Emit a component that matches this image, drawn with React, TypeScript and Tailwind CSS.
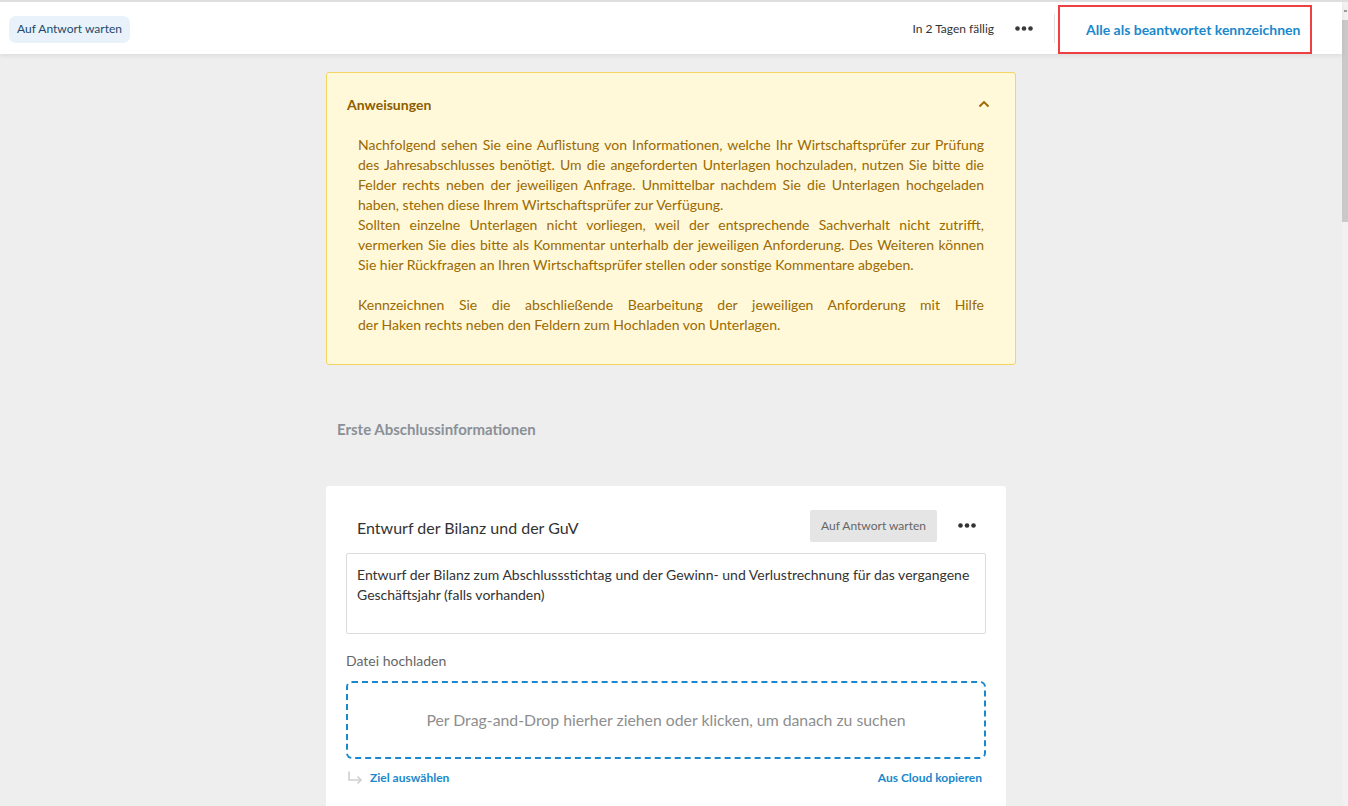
import React from "react";

const Dots = ({ color = "#333" }: { color?: string }) => (
  <svg width="18" height="5" viewBox="0 0 18 5" fill={color}>
    <circle cx="2.5" cy="2.5" r="2.3" />
    <circle cx="9" cy="2.5" r="2.3" />
    <circle cx="15.5" cy="2.5" r="2.3" />
  </svg>
);

const J = ({ children }: { children: React.ReactNode }) => (
  <div className="text-justify [text-align-last:justify]">{children}</div>
);
const L = ({ children }: { children: React.ReactNode }) => <div className="text-left">{children}</div>;

export default function App() {
  return (
    <div
      className="h-[806px] w-[1348px] overflow-hidden flex flex-col border-t-2 border-[#dedede] bg-[#eeeeee]"
      style={{ fontFamily: "Lato, 'Open Sans', 'Liberation Sans', sans-serif" }}
    >
      <div className="flex flex-1 min-h-0">
        <div className="flex-1 flex flex-col min-w-0">
          {/* Header */}
          <header className="h-[52px] bg-white flex items-center pl-[9px] pr-[30px] shadow-[0_2px_4px_rgba(0,0,0,0.07)] relative z-10">
            <div className="h-[27px] mt-[2px] px-[8px] rounded-[7px] bg-[#e9f2fa] text-[12px] text-[#1d4a6c] flex items-center">
              Auf Antwort warten
            </div>
            <div className="flex-1" />
            <span className="text-[12px] text-[#333] mt-[1px]">In 2 Tagen fällig</span>
            <div className="ml-[21px] flex items-center mt-[1px]">
              <Dots color="#3a3a3a" />
            </div>
            <div className="ml-[21px] w-px h-[29px] bg-[#e2e2e2]" />
            <div className="ml-[3px] self-end h-[49px] w-[254px] border-2 border-[#ee3f43] flex items-center pl-[26px] text-[14px] font-bold text-[#1a88cc] whitespace-nowrap">
              Alle als beantwortet kennzeichnen
            </div>
          </header>

          {/* Content */}
          <main className="flex-1 min-h-0 overflow-hidden">
            <div className="w-[690px] mx-auto pt-[18px]">
              {/* Instructions */}
              <section className="bg-[#fff8d9] border border-[#f6d461] rounded-[3px] pt-[21px] pb-[29px]">
                <div className="flex items-center justify-between pl-[20px] pr-[25px] h-[20px]">
                  <span className="text-[14px] font-bold text-[#8d5d00]">Anweisungen</span>
                  <svg width="12" height="8" viewBox="0 0 12 8" fill="none">
                    <polyline points="1.5,6.5 6,2 10.5,6.5" stroke="#9a6600" strokeWidth="1.8" />
                  </svg>
                </div>
                <div className="mt-[21px] px-[31px] text-[14px] leading-[20px] text-[#9c6a00]">
                  <J>Nachfolgend sehen Sie eine Auflistung von Informationen, welche Ihr Wirtschaftsprüfer zur Prüfung</J>
                  <J>des Jahresabschlusses benötigt. Um die angeforderten Unterlagen hochzuladen, nutzen Sie bitte die</J>
                  <J>Felder rechts neben der jeweiligen Anfrage. Unmittelbar nachdem Sie die Unterlagen hochgeladen</J>
                  <L>haben, stehen diese Ihrem Wirtschaftsprüfer zur Verfügung.</L>
                  <J>Sollten einzelne Unterlagen nicht vorliegen, weil der entsprechende Sachverhalt nicht zutrifft,</J>
                  <J>vermerken Sie dies bitte als Kommentar unterhalb der jeweiligen Anforderung. Des Weiteren können</J>
                  <L>Sie hier Rückfragen an Ihren Wirtschaftsprüfer stellen oder sonstige Kommentare abgeben.</L>
                  <div className="h-[20px]" />
                  <J>Kennzeichnen Sie die abschließende Bearbeitung der jeweiligen Anforderung mit Hilfe</J>
                  <L>der Haken rechts neben den Feldern zum Hochladen von Unterlagen.</L>
                </div>
              </section>

              {/* Section title */}
              <h2 className="mt-[54px] pl-[11px] text-[15px] leading-[20px] font-bold text-[#8b9097]">
                Erste Abschlussinformationen
              </h2>

              {/* Card */}
              <div className="mt-[47px] w-[680px] bg-white rounded-[3px] px-[20px] pt-[24px] pb-[40px]">
                <div className="flex items-center h-[32px]">
                  <span className="pl-[11px] text-[16px] text-[#333] mt-[4px]">Entwurf der Bilanz und der GuV</span>
                  <div className="flex-1" />
                  <div className="h-[32px] px-[11px] rounded-[2px] bg-[#e5e5e5] text-[12px] text-[#666] flex items-center">
                    Auf Antwort warten
                  </div>
                  <div className="ml-[21px] mr-[10px] flex items-center mb-[2px]">
                    <Dots color="#333" />
                  </div>
                </div>

                <div className="mt-[11px] h-[81px] border border-[#dcdcdc] rounded-[2px] px-[10px] pt-[11px] text-[14px] leading-[20px] text-[#333]">
                  Entwurf der Bilanz zum Abschlussstichtag und der Gewinn- und Verlustrechnung für das vergangene
                  Geschäftsjahr (falls vorhanden)
                </div>

                <div className="mt-[17px] text-[14px] leading-[20px] text-[#666]">Datei hochladen</div>

                <div className="mt-[10px] h-[78px] border-2 border-dashed border-[#1a88cc] rounded-[6px] flex items-center justify-center text-[15.8px] text-[#8e8e8e]">
                  Per Drag-and-Drop hierher ziehen oder klicken, um danach zu suchen
                </div>

                <div className="mt-[11px] flex items-center h-[16px] pr-[4px]">
                  <svg width="16" height="16" viewBox="0 0 16 16" fill="none" className="ml-[1px]">
                    <path d="M2 1.5 V10 H14" stroke="#cfcfcf" strokeWidth="1.6" />
                    <path d="M10.5 6.5 L14 10 L10.5 13.5" stroke="#cfcfcf" strokeWidth="1.6" />
                  </svg>
                  <span className="ml-[7px] text-[12px] font-bold text-[#1a88cc]">Ziel auswählen</span>
                  <div className="flex-1" />
                  <span className="text-[12px] font-bold text-[#1a88cc]">Aus Cloud kopieren</span>
                </div>
              </div>
            </div>
          </main>
        </div>

        {/* Scrollbar */}
        <div className="w-[6px] bg-[#f1f1f1] flex flex-col items-center">
          <div className="h-[18px] w-full flex items-start justify-center pt-[8px]">
            <div className="w-[3px] h-[2px] bg-[#9a9a9a]" />
          </div>
          <div className="w-full h-[202px] bg-[#c9c9c9]" />
        </div>
      </div>
    </div>
  );
}
